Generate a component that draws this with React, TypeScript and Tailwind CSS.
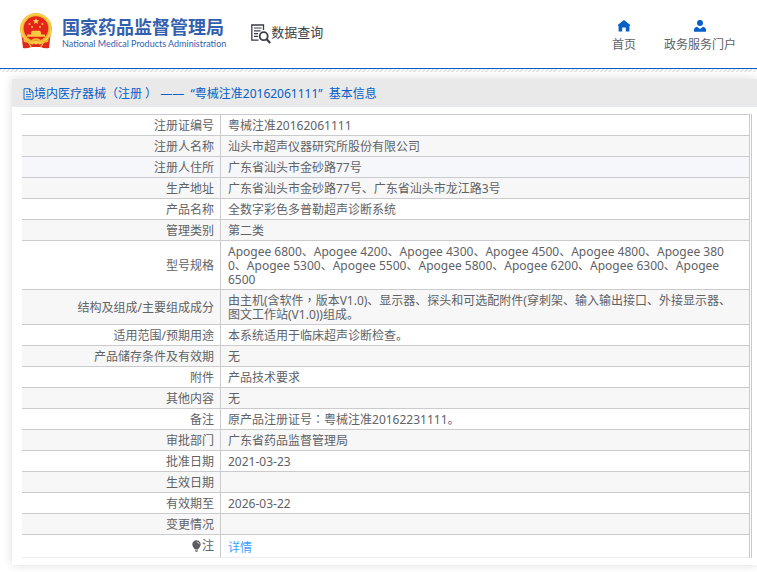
import type { ReactNode } from 'react'
import { clsx } from 'clsx'

interface Row {
  label: string
  value: ReactNode
  active?: boolean
}

// full-width punctuation that sits in the middle of its box
function Mark({ children }: { children: string }) {
  return <span className="font-['Noto_Sans_CJK_TC',sans-serif] leading-none">{children}</span>
}

const rows: Row[] = [
  { label: '注册证编号', value: '粤械注准20162061111' },
  { label: '注册人名称', value: '汕头市超声仪器研究所股份有限公司' },
  { label: '注册人住所', value: '广东省汕头市金砂路77号', active: true },
  { label: '生产地址', value: '广东省汕头市金砂路77号、广东省汕头市龙江路3号' },
  { label: '产品名称', value: '全数字彩色多普勒超声诊断系统' },
  { label: '管理类别', value: '第二类' },
  {
    label: '型号规格',
    value: (
      <>
        Apogee 6800、Apogee 4200、Apogee 4300、Apogee 4500、Apogee 4800、Apogee 3800、Apogee 5300、Apogee
        5500、Apogee 5800、Apogee 6200、Apogee 6300、Apogee <span className="inline-block">6500</span>
      </>
    ),
  },
  {
    label: '结构及组成/主要组成成分',
    value: (
      <>
        由主机(含软件<Mark>，</Mark>
        版本V1.0)、显示器、探头和可选配附件(穿刺架、输入输出接口、外接显示器、图文工作站(V1.0))组成。
      </>
    ),
  },
  { label: '适用范围/预期用途', value: '本系统适用于临床超声诊断检查。' },
  { label: '产品储存条件及有效期', value: '无' },
  { label: '附件', value: '产品技术要求' },
  { label: '其他内容', value: '无' },
  {
    label: '备注',
    value: (
      <>
        原产品注册证号<Mark>：</Mark>粤械注准20162231111。
      </>
    ),
  },
  { label: '审批部门', value: '广东省药品监督管理局' },
  { label: '批准日期', value: '2021-03-23' },
  { label: '生效日期', value: '' },
  { label: '有效期至', value: '2026-03-22' },
  { label: '变更情况', value: '' },
]

function Emblem() {
  return (
    <svg width="34" height="36" viewBox="0 0 34 36" aria-hidden="true">
      <path d="M2.500 22h29l-1.500 13q-5 .8-8-1h-10q-4 1.800-8 1z" fill="#e0271c" />
      <circle cx="17" cy="16" r="16" fill="#f2b530" />
      <circle cx="17" cy="16" r="14.6" fill="none" stroke="#fbd552" strokeWidth="1.4" />
      <circle cx="17" cy="15.500" r="12.300" fill="#e4231b" />
      <path d="M17 5l.9 2.200 2.400.1-1.900 1.500.7 2.300-2.100-1.300-2.100 1.300.7-2.300-1.900-1.500 2.400-.1z" fill="#fbd552" />
      <g fill="#f9c93f">
        <circle cx="10.500" cy="11" r="1" />
        <circle cx="13" cy="14" r="1" />
        <circle cx="21" cy="14" r="1" />
        <circle cx="23.500" cy="11" r="1" />
        <path d="M12 19.500l1-1.700h8l1 1.700v2h4v2.200H8v-2.200h4z" />
      </g>
      <path d="M4 26q6 3 9 .5 1.500-1.200 4-1.200t4 1.200q3 2.500 9-.5l-1 3q-5 1.500-8 0l-4-2-4 2q-3 1.500-8 0z" fill="#f2b530" />
      <path d="M9.500 29.500l3 5M24.500 29.500l-3 5" stroke="#f9c93f" strokeWidth="1.200" />
      <path d="M17 28l4 4.500q-4 2.500-8 0z" fill="#e0271c" />
      <circle cx="17" cy="29.500" r="2" fill="#fbd552" />
    </svg>
  )
}

function SearchDocIcon() {
  return (
    <svg className="mt-1" width="20" height="20" viewBox="0 0 20 20" fill="none" stroke="#3b3b4b" aria-hidden="true">
      <path d="M12.500 6V1H.8v15.200h6.700" strokeWidth="1.300" />
      <path d="M3 4h7.500M3 6.800h6.500M3 9.600h4M3 12.400h4" strokeWidth="1.200" />
      <circle cx="12.700" cy="12.200" r="4" strokeWidth="1.800" />
      <path d="M15.700 15.300l3.500 3.700" strokeWidth="2.200" />
    </svg>
  )
}

function HomeIcon() {
  return (
    <svg width="12" height="12" viewBox="0 0 12 12" fill="#0560c8" aria-hidden="true">
      <path d="M6 0L0 4.800V6h.6v5.500h3.600V7.500h3.600v4h3.600V6h.6V4.800z" />
    </svg>
  )
}

function UserIcon() {
  return (
    <svg width="12" height="12" viewBox="0 0 12 12" fill="#0560c8" aria-hidden="true">
      <circle cx="6" cy="2.900" r="3" />
      <path d="M0 11.700V10q0-2.500 3-3.200L6 9l3-2.200q3 .7 3 3.200v1.700z" />
    </svg>
  )
}

function DocIcon() {
  return (
    <svg width="11" height="12" viewBox="0 0 11 12" fill="none" stroke="#0560c8" strokeWidth="0.9" aria-hidden="true">
      <path d="M1 .7h5.800L10 3.800v7.500H1zM6.500.8v3.400H10M3 4h2M3 6.500h5M3 8.800h5" />
    </svg>
  )
}

function BulbIcon() {
  return (
    <svg width="9" height="12" viewBox="0 0 9 12" aria-hidden="true">
      <path d="M4.500.3a4.200 4.200 0 0 1 4.200 4.200c0 2-1.700 3-2.200 4.500h-4C2 7.500.3 6.500.3 4.500A4.200 4.200 0 0 1 4.500.3z" fill="#5a5c60" />
      <path d="M3 10h3M3.500 11.300h2" stroke="#5a5c60" />
      <path d="M4.700 1.800q2.200.3 2.500 2.400" stroke="#fff" strokeWidth=".7" fill="none" />
    </svg>
  )
}

const labelCell = 'w-[199px] border-r border-[#cbcbce] pr-1.5 pl-2 text-right align-middle font-normal'
const valueCell = 'pr-[7px] pl-[7px] align-middle break-all'

export default function App() {
  return (
    <div className="min-h-screen overflow-x-hidden bg-white font-['Noto_Sans','Noto_Sans_CJK_SC',sans-serif] text-xs text-[#606266]">
      <header className="flex h-[69px] items-start justify-between border-b border-[#0560c8] pr-[21px] pl-[19px]">
        <div className="flex items-start">
          <a href="#" className="flex items-start gap-[9px] pt-[13px] text-[#3360ae]">
            <Emblem />
            <span className="flex flex-col gap-0.5 pt-[3px]">
              <span className="font-['Noto_Sans_CJK_SC',sans-serif] text-lg leading-5 font-bold">国家药品监督管理局</span>
              <span className="font-[Lato,sans-serif] text-[9px] leading-3">
                National Medical Products Administration
              </span>
            </span>
          </a>
          <h1 className="ml-[25px] flex items-center pt-5 font-['Noto_Sans_CJK_SC',sans-serif] text-[13px] leading-5 text-[#404040]">
            <SearchDocIcon />
            数据查询
          </h1>
        </div>
        <nav className="flex gap-7 pt-5">
          <a href="#" className="flex flex-col items-center gap-[5px]">
            <HomeIcon />
            <span className="leading-4">首页</span>
          </a>
          <a href="#" className="flex flex-col items-center gap-[5px]">
            <UserIcon />
            <span className="leading-4">政务服务门户</span>
          </a>
        </nav>
      </header>
      <div className="h-[3px] bg-[repeating-linear-gradient(135deg,#e2e2e2_0,#e2e2e2_1px,#fff_2px,#fff_3px)]" />

      <main className="pt-[7px] pb-2 pl-3">
        <section className="bg-white pb-[7px] shadow-[0_0_9px_rgba(0,0,0,0.15)]">
          <h2 className="flex h-7 items-center border-b border-[#e6eaf5] bg-[#e9e9e9] pt-0.5 pl-[11px] leading-4 whitespace-pre text-[#0560c8]">
            <DocIcon />
            {'境内医疗器械（注册 ） ——  “粤械注准20162061111”  基本信息'}
          </h2>
          <div className="pt-[7px] pr-[5px] pl-[10px]">
            <table className="w-full table-fixed border-separate border-spacing-0 border-r-[3px] border-double border-[#c8c8d0] leading-[14px]">
              <tbody>
                {rows.map((row, i) => (
                  <tr
                    key={row.label}
                    className={clsx(row.active ? 'bg-[#f5f7fa]' : i % 2 === 1 ? 'bg-[#f7f7f7]' : 'bg-white')}
                  >
                    <th scope="row" className={clsx(labelCell, 'h-[21px] border-t pt-1 pb-0.5')}>
                      {row.label}
                    </th>
                    <td className={clsx(valueCell, 'border-t border-[#cbcbce] pt-1 pb-0.5')}>{row.value}</td>
                  </tr>
                ))}
                <tr>
                  <th scope="row" className={clsx(labelCell, 'h-6 border-t border-b border-b-[#ebeef5] pt-0.5')}>
                    <span className="inline-flex items-center gap-px">
                      <BulbIcon />注
                    </span>
                  </th>
                  <td className={clsx(valueCell, 'border-t border-b border-t-[#cbcbce] border-b-[#ebeef5] pt-1')}>
                    <a href="#" className="text-[#409eff]">
                      详情
                    </a>
                  </td>
                </tr>
              </tbody>
            </table>
          </div>
        </section>
      </main>
    </div>
  )
}
